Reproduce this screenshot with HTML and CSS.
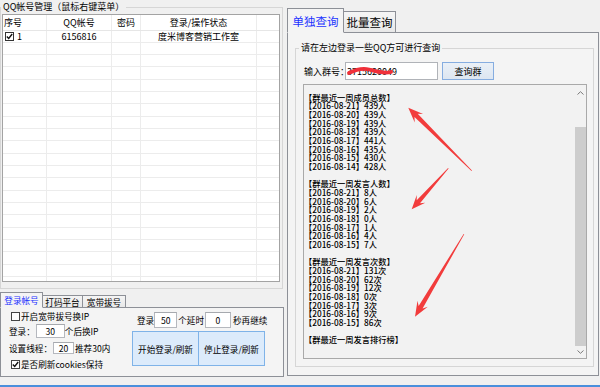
FILE: index.html
```html
<!DOCTYPE html>
<html lang="zh-CN">
<head>
<meta charset="utf-8">
<title>QQ群查询</title>
<link rel="stylesheet" href="styles.css">
</head>
<body>
<div class="window">
  <div class="left">
    <fieldset class="group acct">
      <legend>QQ帐号管理（鼠标右键菜单）</legend>
      <div class="list">
        <div class="lrow head">
          <div class="c c1 la">序号</div>
          <div class="c c2">QQ帐号</div>
          <div class="c c3">密码</div>
          <div class="c c4">登录/操作状态</div>
          <div class="c c5"></div>
        </div>
        <div class="lrow">
          <div class="c c1 la"><span class="cb"><svg width="7" height="7" viewBox="0 0 7 7"><polyline points="0.8,3.4 2.7,5.4 6.2,1" fill="none" stroke="#111" stroke-width="1.4"/></svg></span>1</div>
          <div class="c c2">6156816</div>
          <div class="c c3"></div>
          <div class="c c4">度米博客营销工作室</div>
          <div class="c c5"></div>
        </div>
        <div class="lrow"><div class="c c1"></div><div class="c c2"></div><div class="c c3"></div><div class="c c4"></div><div class="c c5"></div></div>
        <div class="lrow"><div class="c c1"></div><div class="c c2"></div><div class="c c3"></div><div class="c c4"></div><div class="c c5"></div></div>
        <div class="lrow"><div class="c c1"></div><div class="c c2"></div><div class="c c3"></div><div class="c c4"></div><div class="c c5"></div></div>
        <div class="lrow"><div class="c c1"></div><div class="c c2"></div><div class="c c3"></div><div class="c c4"></div><div class="c c5"></div></div>
        <div class="lrow"><div class="c c1"></div><div class="c c2"></div><div class="c c3"></div><div class="c c4"></div><div class="c c5"></div></div>
        <div class="lrow"><div class="c c1"></div><div class="c c2"></div><div class="c c3"></div><div class="c c4"></div><div class="c c5"></div></div>
        <div class="lrow"><div class="c c1"></div><div class="c c2"></div><div class="c c3"></div><div class="c c4"></div><div class="c c5"></div></div>
        <div class="lrow"><div class="c c1"></div><div class="c c2"></div><div class="c c3"></div><div class="c c4"></div><div class="c c5"></div></div>
        <div class="lrow"><div class="c c1"></div><div class="c c2"></div><div class="c c3"></div><div class="c c4"></div><div class="c c5"></div></div>
        <div class="lrow"><div class="c c1"></div><div class="c c2"></div><div class="c c3"></div><div class="c c4"></div><div class="c c5"></div></div>
        <div class="lrow"><div class="c c1"></div><div class="c c2"></div><div class="c c3"></div><div class="c c4"></div><div class="c c5"></div></div>
        <div class="lrow"><div class="c c1"></div><div class="c c2"></div><div class="c c3"></div><div class="c c4"></div><div class="c c5"></div></div>
        <div class="lrow"><div class="c c1"></div><div class="c c2"></div><div class="c c3"></div><div class="c c4"></div><div class="c c5"></div></div>
        <div class="lrow"><div class="c c1"></div><div class="c c2"></div><div class="c c3"></div><div class="c c4"></div><div class="c c5"></div></div>
        <div class="lrow"><div class="c c1"></div><div class="c c2"></div><div class="c c3"></div><div class="c c4"></div><div class="c c5"></div></div>
        <div class="lrow"><div class="c c1"></div><div class="c c2"></div><div class="c c3"></div><div class="c c4"></div><div class="c c5"></div></div>
        <div class="lrow"><div class="c c1"></div><div class="c c2"></div><div class="c c3"></div><div class="c c4"></div><div class="c c5"></div></div>
        <div class="lrow"><div class="c c1"></div><div class="c c2"></div><div class="c c3"></div><div class="c c4"></div><div class="c c5"></div></div>
        <div class="lrow"><div class="c c1"></div><div class="c c2"></div><div class="c c3"></div><div class="c c4"></div><div class="c c5"></div></div>
        <div class="lrow"><div class="c c1"></div><div class="c c2"></div><div class="c c3"></div><div class="c c4"></div><div class="c c5"></div></div>
      </div>
    </fieldset>

    <div class="tabs tabs-s">
      <div class="tabbar">
        <div class="tab active t1">登录帐号</div>
        <div class="tab t2">打码平台</div>
        <div class="tab t3">宽带拔号</div>
      </div>
      <div class="tabpanel panel-s">
        <div class="col-a">
          <div class="arow r1"><span class="cb box-s"></span>开启宽带拔号换IP</div>
          <div class="arow r2">登录：<span class="inp in30">30</span>个后换IP</div>
          <div class="arow r3">设置线程：<span class="inp in20">20</span>推荐30内</div>
          <div class="arow r4"><span class="cb box-s"><svg width="7" height="7" viewBox="0 0 7 7"><polyline points="0.8,3.4 2.7,5.4 6.2,1" fill="none" stroke="#111" stroke-width="1.4"/></svg></span>是否刷新cookies保持</div>
        </div>
        <div class="col-b">
          <div class="brow">登录<span class="inp in50">50</span>个延时<span class="inp in0">0</span>秒再继续</div>
          <div class="btns">
            <div class="btn">开始登录/刷新</div>
            <div class="btn">停止登录/刷新</div>
          </div>
        </div>
      </div>
    </div>
  </div>

  <div class="right">
    <div class="tabs tabs-b">
      <div class="tabbar">
        <div class="tab active tb1">单独查询</div>
        <div class="tab tb2">批量查询</div>
      </div>
      <div class="tabpanel panel-b">
        <fieldset class="group query">
          <legend>请在左边登录一些QQ方可进行查询</legend>
          <div class="qrow">
            <span class="qlabel">输入群号：</span>
            <span class="inp qinput">3715620049</span>
            <div class="qbtn">查询群</div>
          </div>
          <div class="textarea">
            <div class="log">【群最近一周成员总数】
【2016-08-21】439人
【2016-08-20】439人
【2016-08-19】439人
【2016-08-18】439人
【2016-08-17】441人
【2016-08-16】435人
【2016-08-15】430人
【2016-08-14】428人

【群最近一周发言人数】
【2016-08-21】8人
【2016-08-20】6人
【2016-08-19】2人
【2016-08-18】0人
【2016-08-17】1人
【2016-08-16】4人
【2016-08-15】7人

【群最近一周发言次数】
【2016-08-21】131次
【2016-08-20】62次
【2016-08-19】12次
【2016-08-18】0次
【2016-08-17】3次
【2016-08-16】9次
【2016-08-15】86次

【群最近一周发言排行榜】</div>
            <div class="sb">
              <div class="sb-up"><svg width="7" height="4" viewBox="0 0 7 4"><polyline points="0.5,3.5 3.5,0.7 6.5,3.5" fill="none" stroke="#7a7a7a" stroke-width="1"/></svg></div>
              <div class="sb-gap"></div>
              <div class="sb-thumb"></div>
              <div class="sb-down"><svg width="7" height="4" viewBox="0 0 7 4"><polyline points="0.5,0.5 3.5,3.3 6.5,0.5" fill="none" stroke="#7a7a7a" stroke-width="1"/></svg></div>
            </div>
          </div>
        </fieldset>
      </div>
    </div>
  </div>
</div>

<svg class="overlay" width="600" height="387" viewBox="0 0 600 387">
  <path d="M349,73 C355,70 361,67.5 369,69.5 S384,74 391,72" fill="none" stroke="#f0303a" stroke-width="3.8" stroke-linecap="round"/>
  <g fill="#f23c3c">
    <polygon transform="translate(408.3,107.7) rotate(-135.2)" points="-89.4,-0.35 -11,-2.3 -15,-6 0,0 -15,6 -11,2.3 -89.4,0.35"/>
    <polygon transform="translate(411.7,209.3) rotate(131.75)" points="-55,-0.35 -10,-2.2 -14,-5.7 0,0 -14,5.7 -10,2.2 -55,0.35"/>
    <polygon transform="translate(415,316.7) rotate(120.65)" points="-96,-0.35 -11,-2.3 -15,-6 0,0 -15,6 -11,2.3 -96,0.35"/>
  </g>
</svg>
</body>
</html>
```

FILE: styles.css
```css
* { box-sizing: border-box; }
html, body { margin: 0; padding: 0; }
body {
  width: 600px;
  height: 387px;
  overflow: hidden;
  position: relative;
  background: #f0f0f0;
  font-family: "Noto Sans CJK SC", "Liberation Sans", sans-serif;
  font-size: 9px;
  color: #000;
}
.window {
  display: flex;
  height: 387px;
  border-bottom: 2px solid #4a8fdc;
}
.left {
  width: 284px;
  display: flex;
  flex-direction: column;
}
.right {
  flex: 1;
  padding-left: 3px;
}

/* group boxes */
fieldset.group {
  margin: 0;
  min-width: 0;
  border: 1px solid #d6d6d6;
}
.acct {
  width: 283px;
  height: 289px;
  padding: 0 2px 0 1px;
}
.acct legend {
  line-height: 14px;
  padding: 0 2px;
  margin-left: -1px;
}

/* list view */
.list {
  height: 268px;
  border: 1px solid #a3a3a3;
  background: #fff;
  overflow: hidden;
}
.lrow {
  display: flex;
  height: 12.33px;
  border-bottom: 1px solid #ececec;
}
.lrow.head {
  height: 15.5px;
  border-bottom-color: #e6e6e6;
}
.c {
  display: flex;
  align-items: center;
  justify-content: center;
  white-space: nowrap;
  overflow: hidden;
  border-right: 1px solid #ececec;
  line-height: 1;
}
.c.la { justify-content: flex-start; padding-left: 1px; }
.c1 { width: 44px; }
.c2 { width: 65px; }
.c3 { width: 29px; }
.c4 { width: 116px; }
.c5 { flex: 1; border-right: none; }
.lrow .c1 .cb { margin: 0 3px 0 1px; }

.cb {
  width: 9px;
  height: 9px;
  border: 1px solid #333;
  background: #fff;
  display: inline-flex;
  align-items: center;
  justify-content: center;
  flex: none;
}

/* tabs */
.tabbar {
  display: flex;
  align-items: flex-end;
  margin-bottom: -1px;
  position: relative;
  z-index: 1;
}
.tab {
  display: flex;
  align-items: center;
  justify-content: center;
  border: 1px solid #8d9097;
  background: linear-gradient(#f5f5f5, #e8e8e8);
  margin-right: -1px;
  white-space: nowrap;
}
.tab.active {
  background: #f4f4f4;
  border-bottom-color: #f4f4f4;
  color: #1d33ff;
  position: relative;
  z-index: 2;
}
.tabpanel {
  border: 1px solid #8d9097;
  background: #f4f4f4;
}

.tabs-s { margin-top: 1px; width: 284px; font-size: 8.6px; }
.tabs-s .tabbar { height: 18px; }
.tabs-s .tab { height: 13px; }
.tabs-s .tab.active { height: 16px; }
.t1 { width: 43px; }
.t2 { width: 41px; }
.t3 { width: 44px; }
.panel-s {
  height: 70px;
  display: flex;
}
.col-a {
  width: 131px;
  padding-left: 8px;
  display: flex;
  flex-direction: column;
}
.arow {
  display: flex;
  align-items: center;
  white-space: nowrap;
}
.r1 { height: 14px; margin-top: 1px; }
.r2 { height: 16px; }
.r3 { height: 17px; }
.r4 { height: 16px; }
.box-s { margin: 0 1px 0 2px; width: 9px; height: 9px; border-color: #444; }
.inp {
  display: inline-flex;
  align-items: center;
  justify-content: center;
  background: #fff;
  border: 1px solid #b5b8be;
  border-top-color: #a6a9ae;
  flex: none;
}
.in30 { width: 29px; height: 14px; margin-left: 1px; }
.in20 { width: 21px; height: 12px; margin: 0 1px; }
.col-b {
  display: flex;
  flex-direction: column;
}
.brow {
  display: flex;
  align-items: center;
  height: 16px;
  margin-top: 4px;
  padding-left: 5px;
  white-space: nowrap;
}
.in50 { width: 23px; height: 16px; margin: 0 1px 0 0; }
.in0 { width: 26px; height: 16px; margin: 0 2px 0 1px; }
.btns {
  display: flex;
  margin-top: 3px;
}
.btn {
  width: 67px;
  height: 35px;
  display: flex;
  align-items: center;
  justify-content: center;
  border: 1px solid #7fb3e8;
  background: #dcebfb;
}
.btn + .btn { margin-left: -1px; }

/* right tabs */
.tabs-b { width: 312px; margin-top: 8px; }
.tabs-b .tabbar { height: 25px; }
.tabs-b .tab { height: 22px; font-size: 11.5px; }
.tabs-b .tab.active { height: 25px; }
.tb1 { width: 57px; }
.tb2 { width: 53px; }
.panel-b {
  height: 344px;
  padding: 9px 4px 0 7px;
}
.query {
  padding: 8px 6px 7px 7px;
}
.query legend {
  line-height: 12px;
  padding: 0 2px;
  margin-left: -4px;
}
.qrow {
  display: flex;
  align-items: center;
  height: 18px;
}
.qlabel {
  width: 42px;
  padding-left: 1px;
  white-space: nowrap;
}
.qinput {
  width: 93px;
  height: 18px;
  justify-content: flex-start;
  padding-left: 1px;
  margin-right: 4px;
  border-color: #b0b3b8;
}
.qbtn {
  width: 52px;
  height: 18px;
  display: flex;
  align-items: center;
  justify-content: center;
  border: 1px solid #86ade0;
  background: linear-gradient(#eaf0f7, #dde6f1);
}
.textarea {
  margin-top: 4px;
  height: 275px;
  display: flex;
  border: 1px solid #a9a9a9;
  background: #f2f2f2;
}
.log {
  flex: 1;
  padding: 7.5px 0 0 0;
  font-size: 8.25px;
  font-weight: 500;
  line-height: 8.67px;
  white-space: pre;
  overflow: hidden;
  color: #000;
}
.sb {
  width: 12px;
  display: flex;
  flex-direction: column;
}
.sb-up, .sb-down {
  display: flex;
  align-items: center;
  justify-content: center;
}
.sb-up { height: 15px; }
.sb-gap { height: 27px; }
.sb-thumb {
  height: 219px;
  margin-left: 1px;
  background: #cdcdcd;
}
.sb-down { flex: 1; }

.overlay {
  position: absolute;
  left: 0;
  top: 0;
  pointer-events: none;
}
```
